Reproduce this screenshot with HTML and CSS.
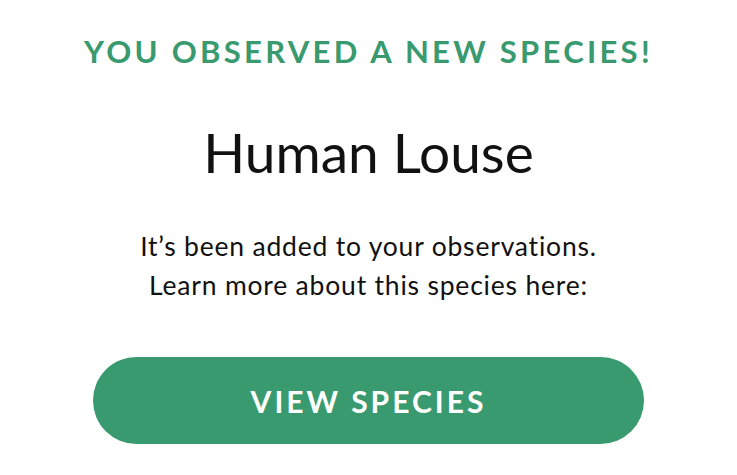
FILE: index.html
```html
<!DOCTYPE html>
<html>
<head>
<meta charset="utf-8">
<link rel="stylesheet" href="styles.css">
</head>
<body>
<main class="card">
  <h1 class="eyebrow">YOU OBSERVED A NEW SPECIES!</h1>
  <h2 class="species">Human Louse</h2>
  <p class="message">It’s been added to your observations.<br>Learn more about this species here:</p>
  <button class="cta">VIEW SPECIES</button>
</main>
</body>
</html>
```
FILE: styles.css
```css
html, body {
  margin: 0;
  padding: 0;
  background: #ffffff;
}
.card {
  width: 737px;
  height: 475px;
  display: flex;
  flex-direction: column;
  align-items: center;
  font-family: Lato, "Open Sans", sans-serif;
  box-sizing: border-box;
  padding-top: 31px;
}
.eyebrow {
  margin: 0;
  font-size: 31px;
  font-weight: 700;
  letter-spacing: 3.3px;
  color: #389a6e;
  line-height: 40px;
}
.species {
  margin: 48px 0 0;
  font-size: 55px;
  font-weight: 400;
  color: #111;
  line-height: 66px;
}
.message {
  margin: 42px 0 0;
  font-size: 26.5px;
  letter-spacing: 0.8px;
  line-height: 39px;
  text-align: center;
  color: #111;
}
.cta {
  margin-top: 52px;
  width: 551px;
  height: 87px;
  border: none;
  border-radius: 44px;
  background: #389a6e;
  color: #fff;
  font-family: Lato, sans-serif;
  font-weight: 700;
  font-size: 30px;
  letter-spacing: 3px;
}
```
